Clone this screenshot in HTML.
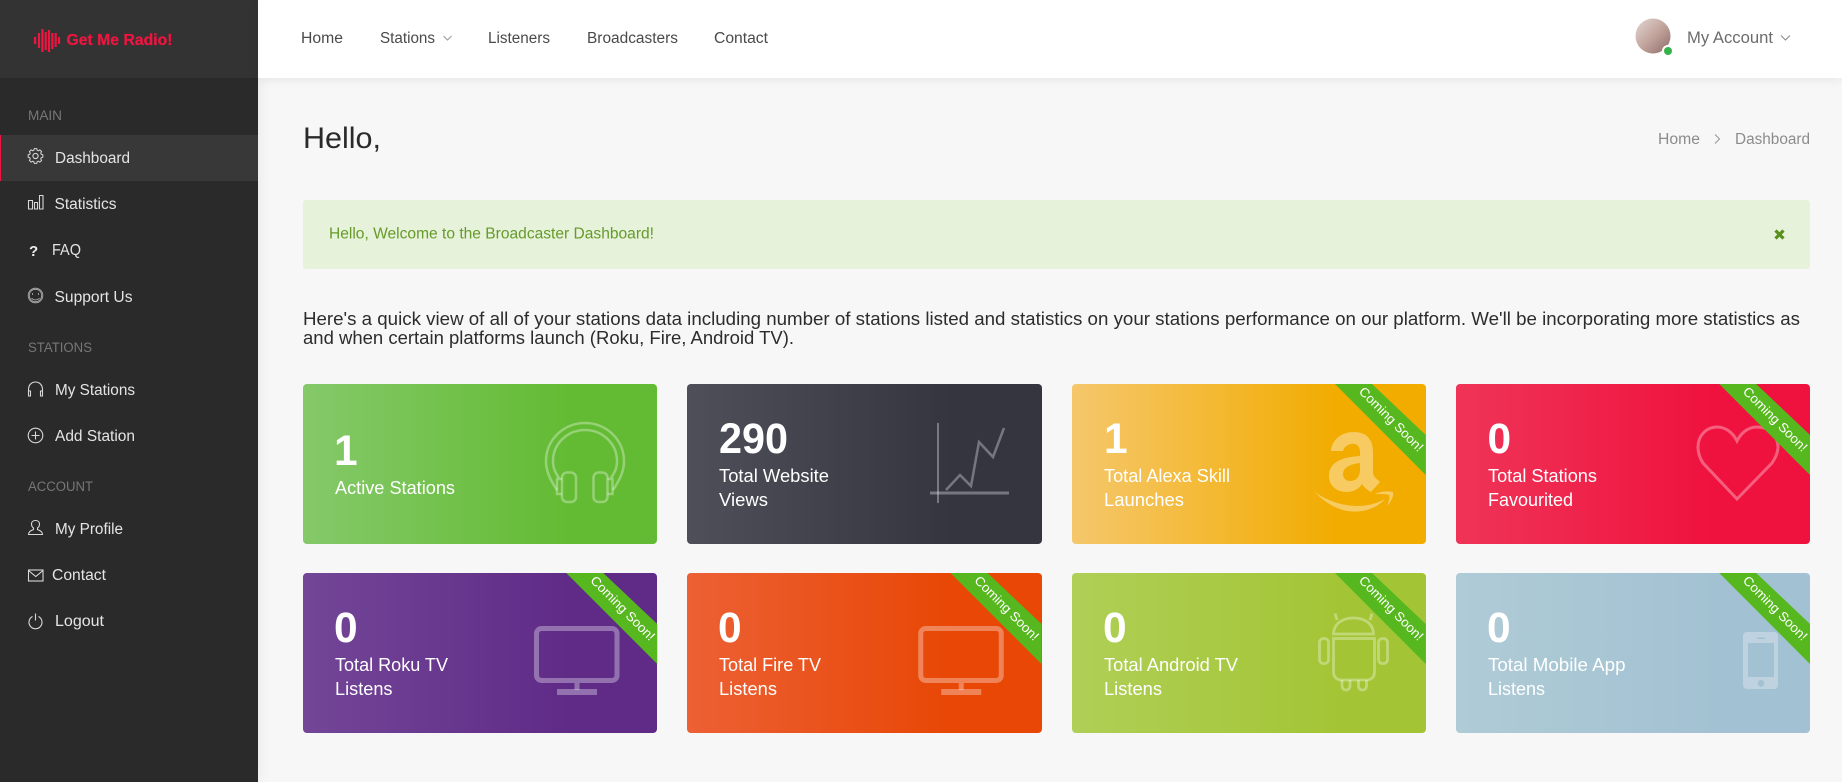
<!DOCTYPE html>
<html lang="en">
<head>
<meta charset="utf-8">
<title>Get Me Radio! Dashboard</title>
<style>
html,body{margin:0;padding:0;width:1842px;height:782px;overflow:hidden;background:#f7f7f7;font-family:"Liberation Sans",sans-serif}
.side{position:absolute;left:0;top:0;width:258px;height:782px;background:#2a2a2a;box-shadow:2px 0 12px rgba(0,0,0,.06)}
.logo{position:absolute;left:0;top:0;width:258px;height:78px;background:#333}
.active{position:absolute;left:0;top:135px;width:258px;height:46px;background:#383838;border-left:1px solid #ee1540;box-sizing:border-box}
.head{position:absolute;left:258px;top:0;width:1584px;height:78px;background:#fff;box-shadow:0 2px 10px rgba(0,0,0,.07)}
.alert{position:absolute;left:303px;top:200px;width:1507px;height:69px;background:#e6f2da;border-radius:3px}
.card{position:absolute;width:354.25px;height:160px;border-radius:4px}
.r1{top:384px}.r2{top:573px}
.c1{left:303px}.c2{left:687.25px}.c3{left:1071.5px}.c4{left:1455.75px}
svg.o{position:absolute;left:0;top:0}
text{font-family:"Liberation Sans",sans-serif}
.m{font-size:15.5px;fill:#e4e4e4}
.h{font-size:13.5px;fill:#777}
.n{font-size:15.5px;fill:#4a4a4a}
.num{font-size:42.5px;font-weight:700;fill:#fff}
.l{font-size:18.5px;fill:#fff}
.cs{font-size:13px;fill:#fff}
.i{fill:none;stroke:#d8d8d8;stroke-width:1.1}
.w{fill:none;stroke:#fff;stroke-opacity:.33}
</style>
</head>
<body>
<div class="side"><div class="logo"></div><div class="active"></div></div>
<div class="head"></div>
<div class="alert"></div>
<div class="card r1 c1" style="background:linear-gradient(to right,#85c96a 0%,#63bb33 75%)"></div>
<div class="card r1 c2" style="background:linear-gradient(to right,#4e4f59 0%,#34353f 75%)"></div>
<div class="card r1 c3" style="background:linear-gradient(to right,#f5c76c 0%,#f2ac00 75%)"></div>
<div class="card r1 c4" style="background:linear-gradient(to right,#ef3457 0%,#ef113e 75%)"></div>
<div class="card r2 c1" style="background:linear-gradient(to right,#734697 0%,#5f2b87 75%)"></div>
<div class="card r2 c2" style="background:linear-gradient(to right,#ec6034 0%,#e84705 75%)"></div>
<div class="card r2 c3" style="background:linear-gradient(to right,#afcf56 0%,#a3c535 75%)"></div>
<div class="card r2 c4" style="background:linear-gradient(to right,#afcbd6 0%,#a2c1d2 75%)"></div>

<svg class="o" width="1842" height="782" viewBox="0 0 1842 782" xmlns="http://www.w3.org/2000/svg">
<!-- logo -->
<g stroke="#ee1540" stroke-width="2.2" fill="none">
<path d="M35 37V44M39 33V48M42.400 29V52M45.700 32V50M49 30V52M52.400 33V49M55.700 33V47M59 37V44"/>
</g>
<text x="66.500" y="45" font-size="16" font-weight="700" fill="#ee1540" stroke="#ee1540" stroke-width=".25" textLength="106" lengthAdjust="spacingAndGlyphs">Get Me Radio!</text>

<!-- sidebar labels -->
<text class="h" x="28" y="120" textLength="34" lengthAdjust="spacingAndGlyphs">MAIN</text>
<text class="h" x="28" y="352" textLength="64" lengthAdjust="spacingAndGlyphs">STATIONS</text>
<text class="h" x="28" y="491" textLength="65" lengthAdjust="spacingAndGlyphs">ACCOUNT</text>
<text class="m" x="55" y="163" textLength="75" lengthAdjust="spacingAndGlyphs">Dashboard</text>
<text class="m" x="54.500" y="209" textLength="62" lengthAdjust="spacingAndGlyphs">Statistics</text>
<text class="m" x="52" y="255" textLength="29" lengthAdjust="spacingAndGlyphs">FAQ</text>
<text class="m" x="54.500" y="302" textLength="78" lengthAdjust="spacingAndGlyphs">Support Us</text>
<text class="m" x="55" y="395" textLength="80" lengthAdjust="spacingAndGlyphs">My Stations</text>
<text class="m" x="55" y="441" textLength="80" lengthAdjust="spacingAndGlyphs">Add Station</text>
<text class="m" x="55" y="534" textLength="68" lengthAdjust="spacingAndGlyphs">My Profile</text>
<text class="m" x="52" y="580" textLength="54" lengthAdjust="spacingAndGlyphs">Contact</text>
<text class="m" x="55" y="626" textLength="49" lengthAdjust="spacingAndGlyphs">Logout</text>

<!-- sidebar icons -->
<g class="i">
<circle cx="35.500" cy="156" r="2.600"/>
<path stroke-width="1.300" d="M33.900 149h3.200l.5 2 1.600.7 1.900-1.100 2.200 2.200-1.100 1.900.7 1.600 2 .5v3.200l-2 .5-.7 1.600 1.100 1.900-2.200 2.200-1.900-1.100-1.600.7-.5 2h-3.200l-.5-2-1.600-.7-1.900 1.100-2.200-2.200 1.100-1.900-.7-1.600-2-.5v-3.200l2-.5.7-1.600-1.100-1.900 2.200-2.200 1.900 1.100 1.600-.7z" transform="translate(35.500 156) scale(.78) translate(-35.500 -158.400)"/>
<path d="M28.500 200.500h4v8.500h-4zM34.500 202.500h3v6.500h-3zM39.500 195.500h3.500v13.500h-3.500z"/>
<g stroke-width=".8" stroke-opacity=".8">
<circle cx="35.500" cy="295.500" r="7.300"/>
<circle cx="35.500" cy="295.500" r="6.200"/>
<path d="M32.500 293v2M38.500 293v2M31.500 298c2 2.500 6 2.500 8 0"/>
</g>
<path d="M28.500 396v-6.500c0-4.500 3-7.500 7-7.500s7 3 7 7.500v6.500M28.500 391h2v5h-2zM40.500 391h2v5h-2z"/>
<circle cx="35.500" cy="435.500" r="7.300"/>
<path d="M35.500 431.500v8M31.500 435.500h8"/>
<path d="M28.500 534.500c0-3.500 3.500-4 5-5v-1.500c-1.500-1-2-3-2-4 0-2 1.500-3.500 4-3.500s4 1.500 4 3.500c0 1-.5 3-2 4v1.500c1.500 1 5 1.500 5 5z"/>
<rect x="28.500" y="570" width="14.500" height="11"/>
<path d="M28.500 570.500l7.250 6 7.250-6"/>
<path d="M32.500 616.500a6.500 6.500 0 1 0 6 0M35.500 613.500v7"/>
</g>
<text x="29" y="256" font-size="15" font-weight="700" fill="#eee">?</text>

<!-- top nav -->
<text class="n" x="301" y="43" textLength="42" lengthAdjust="spacingAndGlyphs">Home</text>
<text class="n" x="380" y="43" textLength="55" lengthAdjust="spacingAndGlyphs">Stations</text>
<path d="M443.500 36l4 4 4-4" fill="none" stroke="#999" stroke-width="1"/>
<text class="n" x="488" y="43" textLength="62" lengthAdjust="spacingAndGlyphs">Listeners</text>
<text class="n" x="587" y="43" textLength="91" lengthAdjust="spacingAndGlyphs">Broadcasters</text>
<text class="n" x="714" y="43" textLength="54" lengthAdjust="spacingAndGlyphs">Contact</text>

<text x="1687" y="43" font-size="16.500" fill="#6c6c6c" textLength="86" lengthAdjust="spacingAndGlyphs">My Account</text>
<path d="M1781 35.500l4.500 4.500 4.500-4.500" fill="none" stroke="#888" stroke-width="1"/>
<defs><linearGradient id="av" x1="0" y1="0" x2="1" y2="1"><stop offset="0" stop-color="#e3d7d3"/><stop offset=".5" stop-color="#c2a59d"/><stop offset="1" stop-color="#8e6a68"/></linearGradient></defs>
<circle cx="1653" cy="36" r="20" fill="#fff"/>
<circle cx="1653" cy="36" r="17.500" fill="url(#av)"/>
<circle cx="1668" cy="51" r="6" fill="#fff"/>
<circle cx="1668" cy="51" r="4" fill="#35b34a"/>

<!-- title -->
<text x="303" y="148" font-size="30" fill="#2a2a2a" textLength="78" lengthAdjust="spacingAndGlyphs">Hello,</text>
<text x="1658" y="144" font-size="15.500" fill="#8c8c8c" textLength="42" lengthAdjust="spacingAndGlyphs">Home</text>
<path d="M1715 134.500l4.500 4.500-4.500 4.500" fill="none" stroke="#999" stroke-width="1.100"/>
<text x="1735" y="144" font-size="15.500" fill="#8c8c8c" textLength="75" lengthAdjust="spacingAndGlyphs">Dashboard</text>

<!-- alert -->
<text x="329" y="238.500" font-size="15.500" fill="#669a2b" textLength="325" lengthAdjust="spacingAndGlyphs">Hello, Welcome to the Broadcaster Dashboard!</text>
<path d="M1775.500 230.500l8 8M1783.500 230.500l-8 8" stroke="#5a8f1e" stroke-width="3.200" fill="none"/>

<!-- paragraph -->
<text x="303" y="325" font-size="18.500" fill="#2c2c2c" textLength="1497" lengthAdjust="spacingAndGlyphs">Here's a quick view of all of your stations data including number of stations listed and statistics on your stations performance on our platform. We'll be incorporating more statistics as</text>
<text x="303" y="344" font-size="18.500" fill="#2c2c2c" textLength="491" lengthAdjust="spacingAndGlyphs">and when certain platforms launch (Roku, Fire, Android TV).</text>

<!-- card 1 -->
<text class="num" x="334" y="465">1</text>
<text class="l" x="335" y="494" textLength="120" lengthAdjust="spacingAndGlyphs">Active Stations</text>
<g class="w" stroke-width="2.500">
<path d="M557 490C549 478 546 470 546 461A39 38 0 0 1 624 461C624 470 621 478 613 490"/>
<path d="M559 478C555 472 553 468 553 461A32 31 0 0 1 617 461C617 468 615 472 611 478"/>
<rect x="562" y="472.500" width="14" height="29.500" rx="5"/>
<rect x="593.500" y="472.500" width="14" height="29.500" rx="5"/>
<path d="M562 479h-5v15h5M607.500 479h5v15h-5"/>
</g>

<!-- card 2 -->
<text class="num" x="719" y="453" textLength="69" lengthAdjust="spacingAndGlyphs">290</text>
<text class="l" x="719" y="482" textLength="110" lengthAdjust="spacingAndGlyphs">Total Website</text>
<text class="l" x="719" y="506" textLength="49" lengthAdjust="spacingAndGlyphs">Views</text>
<g class="w">
<path d="M938 423V503" stroke-width="2"/>
<path d="M930 493H1009" stroke-width="3"/>
<path d="M946 490L960 475L971 486L979 442L993 457L1004 428" stroke-width="2.500"/>
</g>

<!-- card 3 -->
<text class="num" x="1104" y="453">1</text>
<text class="l" x="1104" y="482" textLength="126" lengthAdjust="spacingAndGlyphs">Total Alexa Skill</text>
<text class="l" x="1104" y="506" textLength="80" lengthAdjust="spacingAndGlyphs">Launches</text>
<g fill="#fff" fill-opacity=".38">
<path fill-rule="evenodd" d="M1331 451C1332 439 1342 432 1354 432C1367 432 1373 440 1373 452L1373 472C1373 477 1377 479 1380 482L1371 492C1367 490 1364 487 1362 484C1358 490 1353 492 1346 492C1336 492 1329 485 1329 476C1329 462 1342 457 1360 456L1360 452C1360 446 1356 443 1351 444C1347 445 1344 447 1343 451ZM1360 463C1350 464 1343 468 1343 474C1343 478 1346 481 1350 481C1356 481 1360 477 1360 470Z"/>
<path d="M1315 492C1328 502 1345 506 1358 506C1368 506 1378 503 1385 499C1378 507 1366 512 1354 511.500C1339 511.500 1325 503 1315 492Z"/>
<path d="M1375 494C1381 491 1388 491 1393 492C1394 496 1391 502 1387 506C1389 502 1390 497 1389 495C1386 494 1381 494 1375 494Z"/>
</g>
<g><polygon points="1335,384 1372,384 1425.750,435 1425.750,475" fill="#56b81e"/>
<text class="cs" x="-42.500" y="4" transform="translate(1391 419.500) rotate(45)" textLength="85" lengthAdjust="spacingAndGlyphs">Coming Soon!</text></g>

<!-- card 4 -->
<text class="num" x="1487.500" y="453">0</text>
<text class="l" x="1488" y="482" textLength="109" lengthAdjust="spacingAndGlyphs">Total Stations</text>
<text class="l" x="1488" y="506" textLength="85" lengthAdjust="spacingAndGlyphs">Favourited</text>
<path class="w" stroke-width="3" d="M1737 499L1703 463C1699 457 1698 452 1698 447C1698 435 1707 427 1717 427C1726 427 1733 433 1737 441C1741 433 1748 427 1757 427C1768 427 1778 435 1778 447C1778 452 1776 457 1772 463Z"/>
<g><polygon points="1719.250,384 1756.250,384 1810,435 1810,475" fill="#56b81e"/>
<text class="cs" x="-42.500" y="4" transform="translate(1775 419.500) rotate(45)" textLength="85" lengthAdjust="spacingAndGlyphs">Coming Soon!</text></g>

<!-- card 5 -->
<text class="num" x="334" y="642">0</text>
<text class="l" x="335" y="671" textLength="113" lengthAdjust="spacingAndGlyphs">Total Roku TV</text>
<text class="l" x="335" y="695" textLength="57.500" lengthAdjust="spacingAndGlyphs">Listens</text>
<g class="w"><rect x="536.500" y="628.500" width="80.500" height="52" rx="5" stroke-width="5"/><path d="M577 683V690" stroke-width="5"/><path d="M557 692H597" stroke-width="6"/></g>
<g><polygon points="566.250,573 603.250,573 657.250,624 657.250,664" fill="#56b81e"/>
<text class="cs" x="-42.500" y="4" transform="translate(622.500 608.500) rotate(45)" textLength="85" lengthAdjust="spacingAndGlyphs">Coming Soon!</text></g>

<!-- card 6 -->
<text class="num" x="718" y="642">0</text>
<text class="l" x="719" y="671" textLength="102" lengthAdjust="spacingAndGlyphs">Total Fire TV</text>
<text class="l" x="719" y="695" textLength="58" lengthAdjust="spacingAndGlyphs">Listens</text>
<g class="w"><rect x="920.750" y="628.500" width="80.500" height="52" rx="5" stroke-width="5"/><path d="M961.250 683V690" stroke-width="5"/><path d="M941.250 692H981.250" stroke-width="6"/></g>
<g><polygon points="950.500,573 987.500,573 1041.500,624 1041.500,664" fill="#56b81e"/>
<text class="cs" x="-42.500" y="4" transform="translate(1006.500 608.500) rotate(45)" textLength="85" lengthAdjust="spacingAndGlyphs">Coming Soon!</text></g>

<!-- card 7 -->
<text class="num" x="1103" y="642">0</text>
<text class="l" x="1104" y="671" textLength="134" lengthAdjust="spacingAndGlyphs">Total Android TV</text>
<text class="l" x="1104" y="695" textLength="58" lengthAdjust="spacingAndGlyphs">Listens</text>
<g class="w" stroke-width="2.800">
<path d="M1333.500 634C1333.500 624 1342 618 1353.500 618C1365 618 1373.500 624 1373.500 634Z"/>
<path d="M1337 620L1335 613.500M1370 620L1372 613.500"/>
<path d="M1333.500 638.500H1374.500V672C1374.500 677 1371 680 1367 680H1341C1337 680 1333.500 677 1333.500 672Z"/>
<rect x="1319.500" y="638.500" width="9" height="25" rx="4"/>
<rect x="1378.500" y="638.500" width="9" height="25" rx="4"/>
<path d="M1342 680V686A4 4 0 0 0 1350 686V680M1358.500 680V686A4 4 0 0 0 1366.500 686V680"/>
</g>
<g><polygon points="1335,573 1372,573 1425.750,624 1425.750,664" fill="#56b81e"/>
<text class="cs" x="-42.500" y="4" transform="translate(1391 608.500) rotate(45)" textLength="85" lengthAdjust="spacingAndGlyphs">Coming Soon!</text></g>

<!-- card 8 -->
<text class="num" x="1487" y="642">0</text>
<text class="l" x="1488" y="671" textLength="137.500" lengthAdjust="spacingAndGlyphs">Total Mobile App</text>
<text class="l" x="1488" y="695" textLength="57" lengthAdjust="spacingAndGlyphs">Listens</text>
<path fill="#fff" fill-opacity=".3" fill-rule="evenodd" d="M1747 632H1774A4 4 0 0 1 1778 636V685A4 4 0 0 1 1774 689H1747A4 4 0 0 1 1743 685V636A4 4 0 0 1 1747 632ZM1748 643V677H1774V643ZM1757 637.500V639H1765V637.500ZM1761 680A3.300 3.300 0 1 0 1761 686.600A3.300 3.300 0 1 0 1761 680Z"/>
<g><polygon points="1719.250,573 1756.250,573 1810,624 1810,664" fill="#56b81e"/>
<text class="cs" x="-42.500" y="4" transform="translate(1775 608.500) rotate(45)" textLength="85" lengthAdjust="spacingAndGlyphs">Coming Soon!</text></g>
</svg>
</body>
</html>
